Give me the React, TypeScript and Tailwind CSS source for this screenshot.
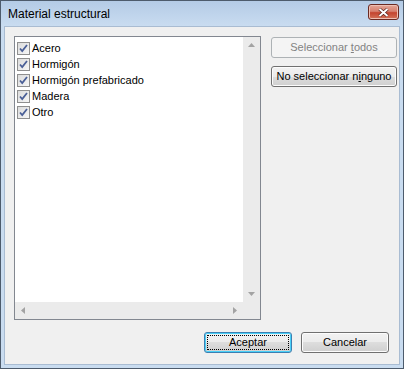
import { type ReactNode } from 'react';

const items = ['Acero', 'Hormigón', 'Hormigón prefabricado', 'Madera', 'Otro'];

const font = { fontFamily: '"Liberation Sans", Arial, sans-serif' };

function CheckBox() {
    return (
        <span className="flex size-[13px] shrink-0 items-center justify-center border border-[#8f8f8f] bg-gradient-to-br from-[#dcdcdc] to-[#f6f6f6]">
            <svg width="11" height="11" viewBox="0 0 11 11">
                <path
                    d="M2 5.5 L4.2 8 L9 2"
                    fill="none"
                    stroke="#4a5f97"
                    strokeWidth="1.8"
                />
            </svg>
        </span>
    );
}

function Arrow({ dir }: { dir: 'up' | 'down' | 'left' | 'right' }) {
    const points = {
        up: '0,4 3.5,0 7,4',
        down: '0,0 3.5,4 7,0',
        left: '4,0 0,3.5 4,7',
        right: '0,0 4,3.5 0,7',
    }[dir];
    const vertical = dir === 'up' || dir === 'down';
    return (
        <svg width={vertical ? 7 : 4} height={vertical ? 4 : 7}>
            <polygon points={points} fill="#a3a3a3" />
        </svg>
    );
}

function Button({
    children,
    disabled,
    primary,
    className,
}: {
    children: ReactNode;
    disabled?: boolean;
    primary?: boolean;
    className: string;
}) {
    if (disabled) {
        return (
            <div
                className={`flex shrink-0 items-center justify-center whitespace-nowrap rounded-[3px] border border-[#adb2b5] bg-[#f4f4f4] text-[#838383] ${className}`}
            >
                {children}
            </div>
        );
    }
    return (
        <div
            className={`relative flex shrink-0 items-center justify-center whitespace-nowrap rounded-[3px] border ${
                primary
                    ? 'border-[#3c7fb1] shadow-[inset_0_0_0_1px_#48d0f8]'
                    : 'border-[#707070] shadow-[inset_0_0_0_1px_#fcfcfc]'
            } bg-[linear-gradient(#f2f2f2_0%,#ebebeb_50%,#dddddd_50%,#cfcfcf_100%)] text-black ${className}`}
        >
            {primary && (
                <span className="absolute inset-[2px] border border-dotted border-black" />
            )}
            <span className="relative">{children}</span>
        </div>
    );
}

export default function App() {
    return (
        <div
            className="flex h-[369px] w-[404px] flex-col border border-[#4d5b6c] bg-[#c9dcf0] text-[11px] text-black"
            style={font}
        >
            {/* Title bar */}
            <div className="flex h-[25px] shrink-0 items-center justify-between bg-gradient-to-b from-[#b4cbe6] to-[#c9dcf0] pl-[7px] pr-[4px]">
                <span className="text-[12px] text-black">Material estructural</span>
                <div className="mb-[3px] flex h-[16px] w-[31px] items-center justify-center rounded-[3px] border border-[#6b2a22] bg-[linear-gradient(#e4a697_0%,#d7806f_45%,#c4442f_55%,#d4735a_100%)] shadow-[inset_0_0_0_1px_#eec0b4]">
                    <svg width="11" height="9" viewBox="0 0 11 9">
                        <path
                            d="M1.5 1 L9.5 8 M9.5 1 L1.5 8"
                            stroke="#4a1a14"
                            strokeWidth="3.2"
                        />
                        <path
                            d="M1.5 1 L9.5 8 M9.5 1 L1.5 8"
                            stroke="#ffffff"
                            strokeWidth="2"
                        />
                    </svg>
                </div>
            </div>

            {/* Client area */}
            <div className="mx-[3px] mb-[3px] flex flex-1 flex-col border border-[#a9bcd2] bg-[#f0f0f0] pl-[9px] pt-[9px]">
                <div className="flex gap-[10px]">
                    {/* List box */}
                    <div className="flex h-[284px] w-[247px] shrink-0 flex-col border border-[#828790] bg-white">
                        <div className="flex flex-1">
                            <div className="flex flex-1 flex-col pl-[2px] pt-[3px]">
                                {items.map((item) => (
                                    <div key={item} className="flex h-[16px] items-center gap-[2px]">
                                        <CheckBox />
                                        <span className="leading-none">{item}</span>
                                    </div>
                                ))}
                            </div>
                            <div className="flex w-[17px] flex-col items-center justify-between bg-[#ebebeb] py-[6px]">
                                <Arrow dir="up" />
                                <Arrow dir="down" />
                            </div>
                        </div>
                        <div className="flex h-[17px]">
                            <div className="flex flex-1 items-center justify-between bg-[#ebebeb] px-[6px]">
                                <Arrow dir="left" />
                                <Arrow dir="right" />
                            </div>
                            <div className="w-[17px] bg-[#ebebeb]" />
                        </div>
                    </div>

                    {/* Side buttons */}
                    <div className="flex flex-col gap-[8px] pt-[1px]">
                        <Button disabled className="h-[21px] w-[126px]">
                            <span>
                                Seleccionar <span className="underline">t</span>odos
                            </span>
                        </Button>
                        <Button className="h-[21px] w-[126px]">
                            <span>
                                No seleccionar n<span className="underline">i</span>nguno
                            </span>
                        </Button>
                    </div>
                </div>

                {/* Dialog buttons */}
                <div className="mt-[12px] flex justify-end gap-[9px] pr-[10px]">
                    <Button primary className="h-[21px] w-[88px]">
                        Aceptar
                    </Button>
                    <Button className="h-[21px] w-[88px]">Cancelar</Button>
                </div>
            </div>
        </div>
    );
}
